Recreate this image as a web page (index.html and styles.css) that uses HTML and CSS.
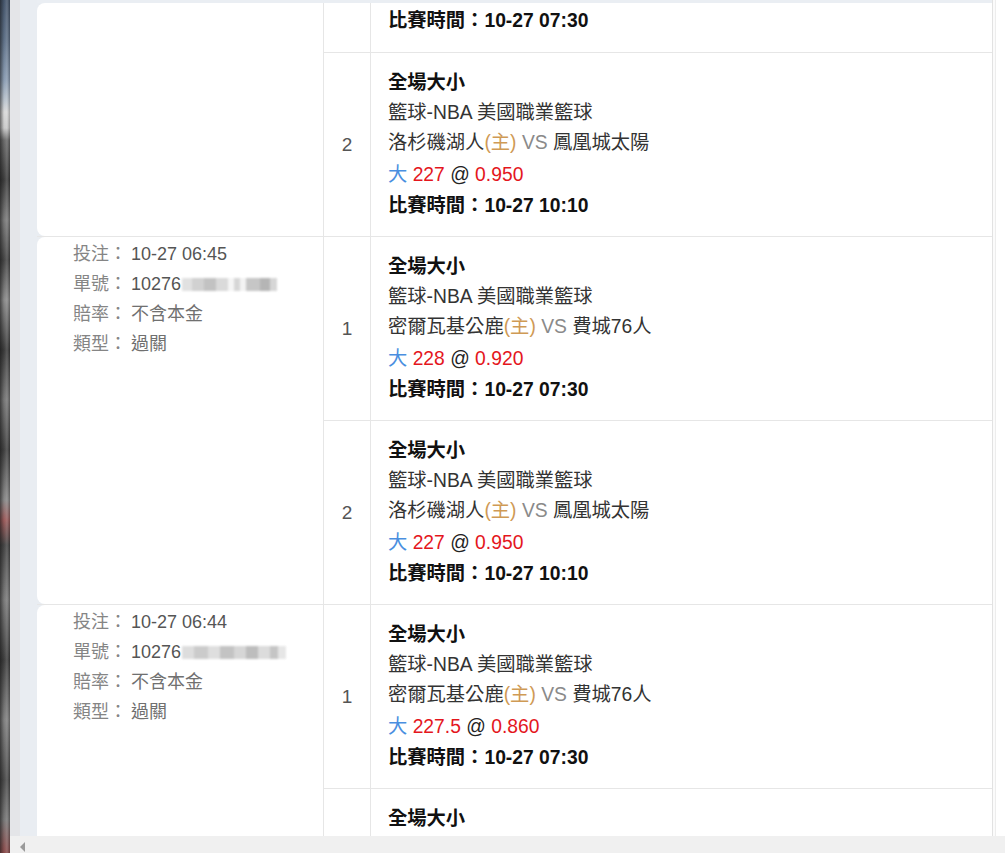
FILE: index.html
```html
<!DOCTYPE html>
<html lang="zh-Hant">
<head>
<meta charset="utf-8">
<title>注單</title>
<link rel="stylesheet" href="styles.css">
</head>
<body>
<div class="screen">
  <div class="edge"></div>
  <div class="window">
    <div class="viewport">
      <div class="gutter"></div>
      <div class="list">
        <div class="table">
          <div class="topband"></div>

          <div class="group">
            <div class="info"></div>
            <div class="legs">
              <div class="leg partial">
                <div class="idx"></div>
                <div class="detail partial-detail">
                  <div class="line time">比賽時間：10-27 07:30</div>
                </div>
              </div>
              <div class="leg">
                <div class="idx">2</div>
                <div class="detail">
                  <div class="line title">全場大小</div>
                  <div class="line">籃球-NBA 美國職業籃球</div>
                  <div class="line">洛杉磯湖人<span class="home">(主)</span> <span class="vs">VS</span> 鳳凰城太陽</div>
                  <div class="line odds"><span class="pick">大</span> <span class="red">227</span> @ <span class="red">0.950</span></div>
                  <div class="line time">比賽時間：10-27 10:10</div>
                </div>
              </div>
            </div>
          </div>

          <div class="group">
            <div class="info">
              <div class="row"><span class="lbl">投注：</span><span class="val">10-27 06:45</span></div>
              <div class="row"><span class="lbl">單號：</span><span class="val">10276</span><span class="blur b1"></span></div>
              <div class="row"><span class="lbl">賠率：</span><span class="val soft">不含本金</span></div>
              <div class="row"><span class="lbl">類型：</span><span class="val soft">過關</span></div>
            </div>
            <div class="legs">
              <div class="leg">
                <div class="idx">1</div>
                <div class="detail">
                  <div class="line title">全場大小</div>
                  <div class="line">籃球-NBA 美國職業籃球</div>
                  <div class="line">密爾瓦基公鹿<span class="home">(主)</span> <span class="vs">VS</span> 費城76人</div>
                  <div class="line odds"><span class="pick">大</span> <span class="red">228</span> @ <span class="red">0.920</span></div>
                  <div class="line time">比賽時間：10-27 07:30</div>
                </div>
              </div>
              <div class="leg">
                <div class="idx">2</div>
                <div class="detail">
                  <div class="line title">全場大小</div>
                  <div class="line">籃球-NBA 美國職業籃球</div>
                  <div class="line">洛杉磯湖人<span class="home">(主)</span> <span class="vs">VS</span> 鳳凰城太陽</div>
                  <div class="line odds"><span class="pick">大</span> <span class="red">227</span> @ <span class="red">0.950</span></div>
                  <div class="line time">比賽時間：10-27 10:10</div>
                </div>
              </div>
            </div>
          </div>

          <div class="group">
            <div class="info">
              <div class="row"><span class="lbl">投注：</span><span class="val">10-27 06:44</span></div>
              <div class="row"><span class="lbl">單號：</span><span class="val">10276</span><span class="blur b2"></span></div>
              <div class="row"><span class="lbl">賠率：</span><span class="val soft">不含本金</span></div>
              <div class="row"><span class="lbl">類型：</span><span class="val soft">過關</span></div>
            </div>
            <div class="legs">
              <div class="leg">
                <div class="idx">1</div>
                <div class="detail">
                  <div class="line title">全場大小</div>
                  <div class="line">籃球-NBA 美國職業籃球</div>
                  <div class="line">密爾瓦基公鹿<span class="home">(主)</span> <span class="vs">VS</span> 費城76人</div>
                  <div class="line odds"><span class="pick">大</span> <span class="red">227.5</span> @ <span class="red">0.860</span></div>
                  <div class="line time">比賽時間：10-27 07:30</div>
                </div>
              </div>
              <div class="leg last">
                <div class="idx"></div>
                <div class="detail">
                  <div class="line title">全場大小</div>
                </div>
              </div>
            </div>
          </div>
        </div>
      </div>
      <div class="rightpane"></div>
    </div>
    <div class="hscroll"><span class="arrow"></span></div>
  </div>
</div>
</body>
</html>
```

FILE: styles.css
```css
html, body {
  margin: 0;
  padding: 0;
  background: #ffffff;
}

body {
  font-family: "Liberation Sans", "Noto Sans CJK TC", Arial, sans-serif;
  color: #333;
}

.screen {
  display: flex;
  width: 1005px;
  height: 853px;
  overflow: hidden;
}

.edge {
  width: 10px;
  flex: none;
  background:
    linear-gradient(90deg, rgba(20,20,20,0.55) 0%, rgba(0,0,0,0) 40%, rgba(255,255,255,0.15) 70%, rgba(0,0,0,0.25) 100%),
    linear-gradient(180deg, #44546a 0px, #5d6f86 40px, #8a9cb2 80px, #b8c2cc 100px, #d8d8d8 112px, #c9c9c9 128px, #6a6a6a 140px, #3c3c3c 180px, #7a7a7a 220px, #444 260px, #8a8a8a 300px, #3a3a3a 350px, #777 400px, #404040 450px, #888 500px, #9a5a5a 520px, #444 545px, #7a7a7a 600px, #3d3d3d 660px, #808080 720px, #4a4a4a 780px, #777 820px, #8a4a4a 853px);
}

.window {
  flex: 1;
  display: flex;
  flex-direction: column;
  min-width: 0;
}

.viewport {
  height: 836px;
  display: flex;
  overflow: hidden;
}

.gutter {
  width: 10px;
  flex: none;
  background: #e4e5e8;
}

.list {
  width: 973px;
  flex: none;
  box-sizing: border-box;
  padding-left: 17px;
  background: #e9edf2;
}

.table {
  width: 956px;
  box-sizing: border-box;
  border-right: 1px solid #e2e2e2;
}

.topband {
  height: 3px;
  background: #eaeef3;
}

.group {
  display: flex;
  border-bottom: 1px solid #e6e6e6;
}

.info {
  width: 287px;
  flex: none;
  box-sizing: border-box;
  background: #fff;
  border-right: 1px solid #e6e6e6;
  border-radius: 8px 0 0 8px;
  padding: 2px 0 0 36px;
  font-size: 18px;
}

.row {
  height: 30px;
  line-height: 30px;
  display: flex;
  align-items: center;
  white-space: nowrap;
}

.lbl {
  color: #858585;
  margin-right: 4px;
}

.val {
  color: #555;
}

.val.soft {
  color: #707070;
}

.blur {
  display: inline-block;
  height: 13px;
  margin-left: 1px;
  filter: blur(1.2px);
  opacity: 0.85;
}

.b1 {
  width: 95px;
  background: linear-gradient(90deg,
    #dcdcdc 0 10px, #c9c9c9 10px 22px, #b8b8b8 22px 34px, #d4d4d4 34px 46px,
    #f4f4f4 46px 52px, #d0d0d0 52px 58px, #f2f2f2 58px 64px,
    #bdbdbd 64px 78px, #a9a9a9 78px 88px, #cfcfcf 88px 95px);
}

.b2 {
  width: 104px;
  background: linear-gradient(90deg,
    #d8d8d8 0 12px, #c3c3c3 12px 26px, #d9d9d9 26px 38px, #b9b9b9 38px 52px,
    #cfcfcf 52px 64px, #b2b2b2 64px 76px, #d6d6d6 76px 88px, #bcbcbc 88px 96px, #e2e2e2 96px 104px);
}

.legs {
  flex: 1;
  min-width: 0;
  background: #fff;
}

.leg {
  display: flex;
  border-top: 1px solid #e6e6e6;
}

.leg:first-child {
  border-top: none;
}

.leg.partial {
  height: 49px;
}

.leg.last {
  height: 120px;
}

.idx {
  width: 47px;
  flex: none;
  box-sizing: border-box;
  border-right: 1px solid #e6e6e6;
  display: flex;
  align-items: center;
  justify-content: center;
  font-size: 19px;
  color: #555;
}

.detail {
  flex: 1;
  padding: 15px 17px;
  font-size: 19.3px;
  color: #333;
}

.detail.partial-detail {
  padding-top: 3px;
  padding-bottom: 0;
}

.line {
  height: 30px;
  line-height: 30px;
  white-space: nowrap;
}

.line.odds {
  height: 33px;
  line-height: 33px;
  color: #222;
}

.title,
.time {
  font-weight: bold;
  color: #111;
}

.home {
  color: #cf9a55;
}

.vs {
  color: #8a8a8a;
}

.pick {
  color: #4a8fe0;
}

.red {
  color: #e4161d;
}

.rightpane {
  flex: 1;
  background: #fff;
  border-left: 2px solid #fbfbfb;
  box-shadow: inset 1px 0 0 #ededed;
}

.hscroll {
  height: 17px;
  background: #f0f0f0;
  position: relative;
}

.arrow {
  position: absolute;
  left: 10px;
  top: 6px;
  width: 0;
  height: 0;
  border-top: 5px solid transparent;
  border-bottom: 5px solid transparent;
  border-right: 5px solid #9a9a9a;
}
```
